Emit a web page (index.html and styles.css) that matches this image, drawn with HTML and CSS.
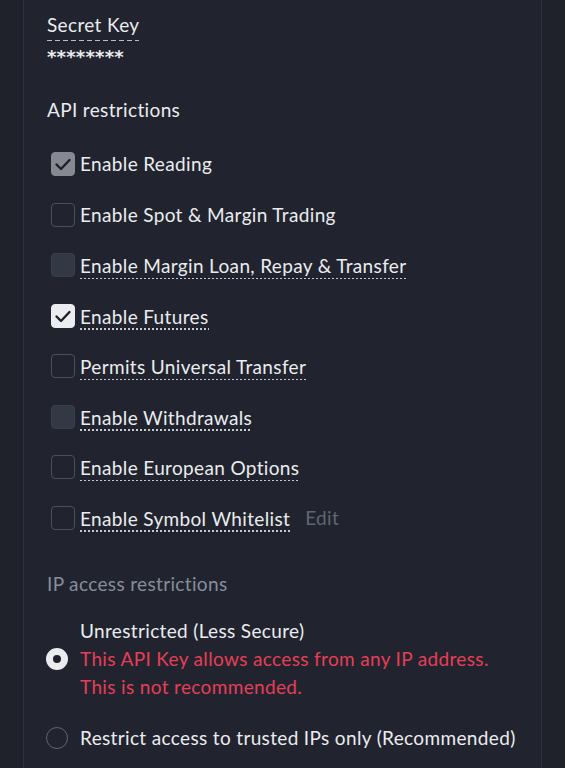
FILE: index.html
```html
<!DOCTYPE html>
<html>
<head>
<meta charset="utf-8">
<link rel="stylesheet" href="styles.css">
</head>
<body>
<div class="card">
  <div class="field">
    <div class="field-label"><span class="dashed">Secret Key</span></div>
    <div class="field-value">********</div>
  </div>

  <div class="section-title">API restrictions</div>

  <div class="checks">
    <div class="check-row">
      <span class="box box-checked-disabled"><svg viewBox="0 0 24 24" width="24" height="24"><path d="M5.5 12.5l4.5 4.5 8.5-9" fill="none" stroke="#1e2129" stroke-width="2.4" stroke-linecap="round" stroke-linejoin="round"/></svg></span>
      <span class="label">Enable Reading</span>
    </div>
    <div class="check-row">
      <span class="box"></span>
      <span class="label">Enable Spot &amp; Margin Trading</span>
    </div>
    <div class="check-row">
      <span class="box box-disabled"></span>
      <span class="label dotted">Enable Margin Loan, Repay &amp; Transfer</span>
    </div>
    <div class="check-row">
      <span class="box box-checked"><svg viewBox="0 0 24 24" width="24" height="24"><path d="M5.5 12.5l4.5 4.5 8.5-9" fill="none" stroke="#1e2129" stroke-width="2.4" stroke-linecap="round" stroke-linejoin="round"/></svg></span>
      <span class="label dotted">Enable Futures</span>
    </div>
    <div class="check-row">
      <span class="box"></span>
      <span class="label dotted">Permits Universal Transfer</span>
    </div>
    <div class="check-row">
      <span class="box box-disabled"></span>
      <span class="label dotted">Enable Withdrawals</span>
    </div>
    <div class="check-row">
      <span class="box"></span>
      <span class="label dotted">Enable European Options</span>
    </div>
    <div class="check-row">
      <span class="box"></span>
      <span class="label dotted">Enable Symbol Whitelist</span>
      <span class="edit">Edit</span>
    </div>
  </div>

  <div class="section-title muted">IP access restrictions</div>

  <div class="radios">
    <div class="radio-row">
      <span class="radio radio-on"></span>
      <div class="radio-text">
        <div class="radio-label">Unrestricted (Less Secure)</div>
        <div class="warn">This API Key allows access from any IP address.</div>
        <div class="warn">This is not recommended.</div>
      </div>
    </div>
    <div class="radio-row radio-row-single">
      <span class="radio"></span>
      <div class="radio-text">
        <div class="radio-label">Restrict access to trusted IPs only (Recommended)</div>
      </div>
    </div>
  </div>
</div>
</body>
</html>
```

FILE: styles.css
```css
* { box-sizing: border-box; }
html, body {
  margin: 0;
  padding: 0;
  background: #1f222b;
  height: 100%;
  overflow: hidden;
}
body {
  font-family: Lato, "Open Sans", sans-serif;
  color: #eaecef;
  font-size: 19px;
  letter-spacing: 0.35px;
}
.card {
  margin-left: 23px;
  width: 519px;
  min-height: 768px;
  background: #21242e;
  border-left: 1px solid #2e313b;
  border-right: 1px solid #2e313b;
  padding: 13px 0 0 23px;
}
.field-label {
  line-height: 24px;
  height: 32px;
}
.dashed {
  display: inline-block;
  line-height: 24px;
  padding-bottom: 4px;
  background-image: linear-gradient(to right, #b7bdc6 0 5px, transparent 5px 8px);
  background-size: 8px 1px;
  background-repeat: repeat-x;
  background-position: 0 100%;
}
.field-value {
  line-height: 24px;
  font-family: "DejaVu Sans", sans-serif;
  letter-spacing: 0.2px;
  font-weight: 700;
  font-size: 18px;
}
.section-title {
  margin-top: 29px;
  line-height: 24px;
}
.muted { color: #848e9c; margin-top: 42px; }
.checks {
  display: flex;
  flex-direction: column;
  gap: 26.5px;
  margin-top: 30px;
  padding-left: 4px;
}
.check-row {
  display: flex;
  align-items: center;
  height: 24px;
}
.box {
  width: 24px;
  height: 24px;
  border: 1.5px solid #4a505b;
  border-radius: 4px;
  margin-right: 5px;
  flex: none;
  display: flex;
  align-items: center;
  justify-content: center;
}
.box svg { display: block; flex: none; }
.box-checked-disabled { background: #868991; border-color: #868991; }
.box-checked { background: #eaecef; border-color: #eaecef; }
.box-disabled { background: #333845; border-color: #3a3f4b; }
.label {
  line-height: 24px;
}
.dotted {
  padding-top: 4px;
  line-height: 22px;
  padding-bottom: 2px;
  background-image: linear-gradient(to right, #c5c9d0 0 2px, transparent 2px 4px);
  background-size: 4px 1.5px;
  background-repeat: repeat-x;
  background-position: 0 100%;
}
.edit {
  color: #5e6673;
  margin-left: 15px;
}
.radios {
  margin-top: 21px;
  display: flex;
  flex-direction: column;
  gap: 23px;
}
.radio-row {
  display: flex;
  align-items: center;
}
.radio {
  width: 22px;
  height: 22px;
  border-radius: 50%;
  border: 1.5px solid #5e6673;
  margin-left: -1px;
  margin-right: 12px;
  flex: none;
}
.radio-on {
  border: 7px solid #eaecef;
  background: #1e2129;
}
.radio-label { line-height: 28px; }
.warn { color: #e63e57; line-height: 28px; }
```
